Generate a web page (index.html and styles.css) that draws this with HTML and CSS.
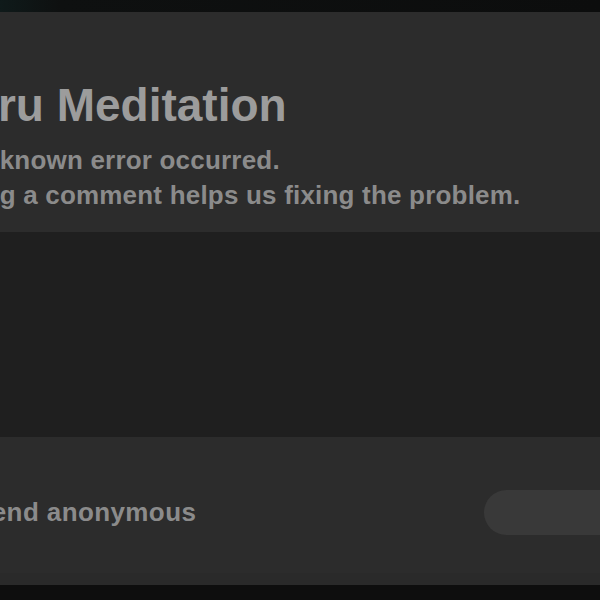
FILE: index.html
```html
<!DOCTYPE html>
<html>
<head>
<meta charset="utf-8">
<link rel="stylesheet" href="styles.css">
</head>
<body>
<div class="topbar"></div>
<div class="dialog">
  <div class="header">
    <h1 class="title">Guru Meditation</h1>
    <p class="msg">An unknown error occurred.</p>
    <p class="msg">Adding a comment helps us fixing the problem.</p>
  </div>
  <div class="comment"></div>
  <div class="footer">
    <label class="anon">Send anonymous</label>
    <button class="send"></button>
  </div>
</div>
<div class="bottombar"></div>
</body>
</html>
```
FILE: styles.css
```css
html, body {
  margin: 0;
  padding: 0;
  background: #0e0f10;
  overflow: hidden;
  width: 600px;
  height: 600px;
  font-family: "Liberation Sans", Arial, sans-serif;
}
.topbar {
  height: 12px;
  background: linear-gradient(90deg, #0f1a1a 0, #0e1010 60px, #0c0d0d 100%);
}
.dialog {
  display: flex;
  flex-direction: column;
}
.header {
  height: 220px;
  background: #2c2c2c;
  box-sizing: border-box;
  padding-top: 67px;
  margin-left: -66px;
}
.title {
  margin: 0;
  font-size: 46px;
  line-height: 52px;
  font-weight: bold;
  color: #9c9c9c;
}
.msg {
  margin: 0 0 0 -9px;
  font-size: 26px;
  line-height: 35px;
  font-weight: bold;
  letter-spacing: 0.2px;
  color: #8b8b8b;
}
.title + .msg {
  margin-top: 12px;
}
.comment {
  height: 205px;
  background: #1f1f1f;
}
.footer {
  height: 148px;
  background: #2c2c2c;
  display: flex;
  align-items: center;
  justify-content: space-between;
  margin-left: -26px;
  padding-top: 14px;
  border-bottom: 12px solid #2a2a2a;
  box-sizing: border-box;
}
.anon {
  font-size: 26px;
  font-weight: bold;
  letter-spacing: 0.4px;
  color: #8b8b8b;
}
.send {
  width: 140px;
  height: 45px;
  margin-right: -24px;
  border: none;
  border-radius: 23px;
  background: #393939;
}
.bottombar {
  height: 15px;
  background: #0e0e0e;
}
```
